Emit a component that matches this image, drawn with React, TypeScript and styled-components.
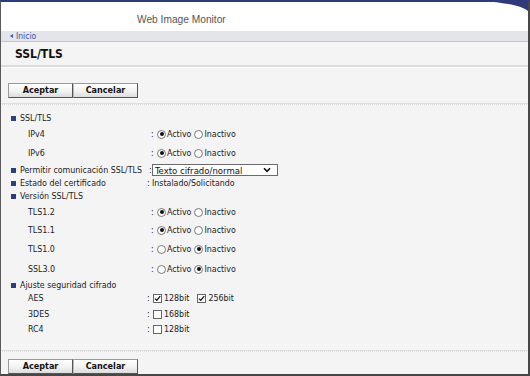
import React from "react";
import styled, { createGlobalStyle } from "styled-components";

const Global = createGlobalStyle`
  html, body { margin: 0; padding: 0; background: #f4f4f4; }
  body { font-family: "DejaVu Sans Condensed", "DejaVu Sans", Tahoma, sans-serif; font-stretch: condensed; }
  * { box-sizing: border-box; }
`;

const Frame = styled.div`
  width: 530px;
  height: 376px;
  display: flex;
  flex-direction: column;
  border-top: 2px solid #2f3b78;
  border-left: 1px solid #5a5a5a;
  border-right: 2px solid #474747;
  border-bottom: 2px solid #474747;
  background: #f4f4f4;
  overflow: hidden;
`;

const Header = styled.div`
  position: relative;
  height: 29px;
  background: #fff;
  padding-left: 136px;
  display: flex;
  align-items: center;
  font-family: "Liberation Sans", Arial, sans-serif;
  font-stretch: normal;
  font-size: 10.2px;
  color: #555;
  padding-top: 5px;
`;

const Swoosh = styled.svg`
  position: absolute;
  top: 0;
  right: 0;
`;

const NavBar = styled.div`
  height: 11px;
  background: #e3e5eb;
  border-bottom: 1px solid #c6c6c9;
  padding-left: 9px;
  display: flex;
  align-items: center;
  gap: 2px;
  font-size: 8.5px;
  color: #3a55a8;
  line-height: 1;
`;

const Arrow = styled.span`
  width: 0;
  height: 0;
  border-top: 2.5px solid transparent;
  border-bottom: 2.5px solid transparent;
  border-right: 3px solid #3a55a8;
  margin-right: 1px;
`;

const TitleBar = styled.div`
  height: 25px;
  padding-left: 14px;
  display: flex;
  align-items: center;
  font-size: 12px;
  font-weight: bold;
  font-stretch: normal;
  color: #111;
  border-bottom: 2px solid #dcdcdc;
  box-shadow: 0 1px 0 #fafafa;
`;

const ButtonRow = styled.div<{ $top: number; $bottom: number }>`
  display: flex;
  padding: ${(p) => p.$top}px 8px ${(p) => p.$bottom}px 7px;
`;

const Button = styled.button`
  width: 65px;
  height: 15px;
  padding: 0;
  margin: 0;
  font-family: inherit;
  font-size: 9px;
  font-weight: bold;
  color: #111;
  background: linear-gradient(#ffffff 0%, #f2f2f2 55%, #dcdcdc 100%);
  border: 1px solid #9a9a9a;
  border-right-color: #555;
  border-bottom-color: #555;
  line-height: 13px;
  & + & { border-left-color: #bbb; }
`;

const Divider = styled.div`
  height: 2px;
  background: #dedede;
  border-bottom: 1px dotted #f8f8f8;
`;

const Form = styled.div`
  padding: 6px 0 0 0;
  flex: 1;
  display: flex;
  flex-direction: column;
  font-size: 8.8px;
  color: #222;
`;

const Row = styled.div<{ $h: number }>`
  height: ${(p) => p.$h}px;
  display: flex;
  align-items: center;
  white-space: nowrap;
`;

const Label = styled.div<{ $sub?: boolean; $w: number }>`
  width: ${(p) => p.$w}px;
  flex: none;
  display: flex;
  align-items: center;
  padding-left: ${(p) => (p.$sub ? 27 : 10)}px;
  gap: 4px;
`;

const Bullet = styled.span`
  width: 5px;
  height: 5px;
  background: #2d3f7e;
  flex: none;
`;

const Colon = styled.span<{ $w: number }>`
  width: ${(p) => p.$w}px;
  flex: none;
`;

const Value = styled.div`
  display: flex;
  align-items: center;
`;

const RadioCircle = styled.span<{ $on: boolean }>`
  width: 9px;
  height: 9px;
  border-radius: 50%;
  border: 1px solid #777;
  background: #fff;
  display: inline-flex;
  align-items: center;
  justify-content: center;
  margin-right: 1px;
  &::after {
    content: "";
    width: 4px;
    height: 4px;
    border-radius: 50%;
    background: ${(p) => (p.$on ? "#111" : "transparent")};
  }
`;

const OptText = styled.span<{ $gap: number }>`
  margin-right: ${(p) => p.$gap}px;
`;

const CheckBox = styled.span`
  width: 9px;
  height: 9px;
  border: 1px solid #666;
  background: #fff;
  display: inline-flex;
  margin-right: 2px;
`;

const Select = styled.div`
  width: 126px;
  height: 12px;
  border: 1px solid #6a6a6a;
  background: #fff;
  display: flex;
  align-items: center;
  justify-content: space-between;
  padding: 0 6px 0 2px;
  font-size: 9.5px;
  color: #111;
`;

const SpacerFlex = styled.div`
  flex: 1;
`;

type Opt = { on: boolean };

const Radios = ({ active }: { active: boolean }) => (
  <Value>
    <RadioCircle $on={active} />
    <OptText $gap={3}>Activo</OptText>
    <RadioCircle $on={!active} />
    <OptText $gap={0}>Inactivo</OptText>
  </Value>
);

const Check = ({ on }: Opt) => (
  <CheckBox>
    {on && (
      <svg width="7" height="7" viewBox="0 0 7 7">
        <path d="M1 3.6 L2.8 5.4 L6.2 1.2" fill="none" stroke="#111" strokeWidth="1.3" />
      </svg>
    )}
  </CheckBox>
);

const Chevron = () => (
  <svg width="8" height="6" viewBox="0 0 8 6">
    <path d="M1 1.2 L4 4.4 L7 1.2" fill="none" stroke="#111" strokeWidth="1.6" />
  </svg>
);

const RadioRow = ({ label, h, active }: { label: string; h: number; active: boolean }) => (
  <Row $h={h}>
    <Label $sub $w={150}>{label}</Label>
    <Colon $w={6}>:</Colon>
    <Radios active={active} />
  </Row>
);

const CheckRow = ({ label, h, opts }: { label: string; h: number; opts: [string, boolean][] }) => (
  <Row $h={h}>
    <Label $sub $w={146}>{label}</Label>
    <Colon $w={6}>:</Colon>
    <Value>
      {opts.map(([t, on], i) => (
        <React.Fragment key={t + i}>
          <Check on={on} />
          <OptText $gap={i < opts.length - 1 ? 8 : 0}>{t}</OptText>
        </React.Fragment>
      ))}
    </Value>
  </Row>
);

const Heading = ({ label, h }: { label: string; h: number }) => (
  <Row $h={h}>
    <Label $w={200}>
      <Bullet />
      {label}
    </Label>
  </Row>
);

export default function App() {
  return (
    <>
      <Global />
      <Frame>
        <Header>
          Web Image Monitor
          <Swoosh width="34" height="9" viewBox="0 0 34 9">
            <path d="M0 0 H34 V9 C28 4 16 2 0 0 Z" fill="#2f3b78" />
          </Swoosh>
        </Header>
        <NavBar>
          <Arrow />
          Inicio
        </NavBar>
        <TitleBar>SSL/TLS</TitleBar>
        <ButtonRow $top={16} $bottom={5}>
          <Button>Aceptar</Button>
          <Button>Cancelar</Button>
        </ButtonRow>
        <Divider />
        <Form>
          <Heading label="SSL/TLS" h={14} />
          <RadioRow label="IPv4" h={18} active />
          <RadioRow label="IPv6" h={20} active />
          <Row $h={14}>
            <Label $w={148}>
              <Bullet />
              Permitir comunicación SSL/TLS
            </Label>
            <Colon $w={3}>:</Colon>
            <Select>
              Texto cifrado/normal
              <Chevron />
            </Select>
          </Row>
          <Row $h={12}>
            <Label $w={146}>
              <Bullet />
              Estado del certificado
            </Label>
            <Colon $w={5}>:</Colon>
            <Value>Instalado/Solicitando</Value>
          </Row>
          <Heading label="Versión SSL/TLS" h={14} />
          <RadioRow label="TLS1.2" h={18} active />
          <RadioRow label="TLS1.1" h={18} active />
          <RadioRow label="TLS1.0" h={20} active={false} />
          <RadioRow label="SSL3.0" h={20} active={false} />
          <Heading label="Ajuste seguridad cifrado" h={12} />
          <CheckRow label="AES" h={14} opts={[["128bit", true], ["256bit", true]]} />
          <CheckRow label="3DES" h={18} opts={[["168bit", false]]} />
          <CheckRow label="RC4" h={12} opts={[["128bit", false]]} />
          <SpacerFlex />
        </Form>
        <Divider />
        <ButtonRow $top={7} $bottom={0}>
          <Button>Aceptar</Button>
          <Button>Cancelar</Button>
        </ButtonRow>
      </Frame>
    </>
  );
}
